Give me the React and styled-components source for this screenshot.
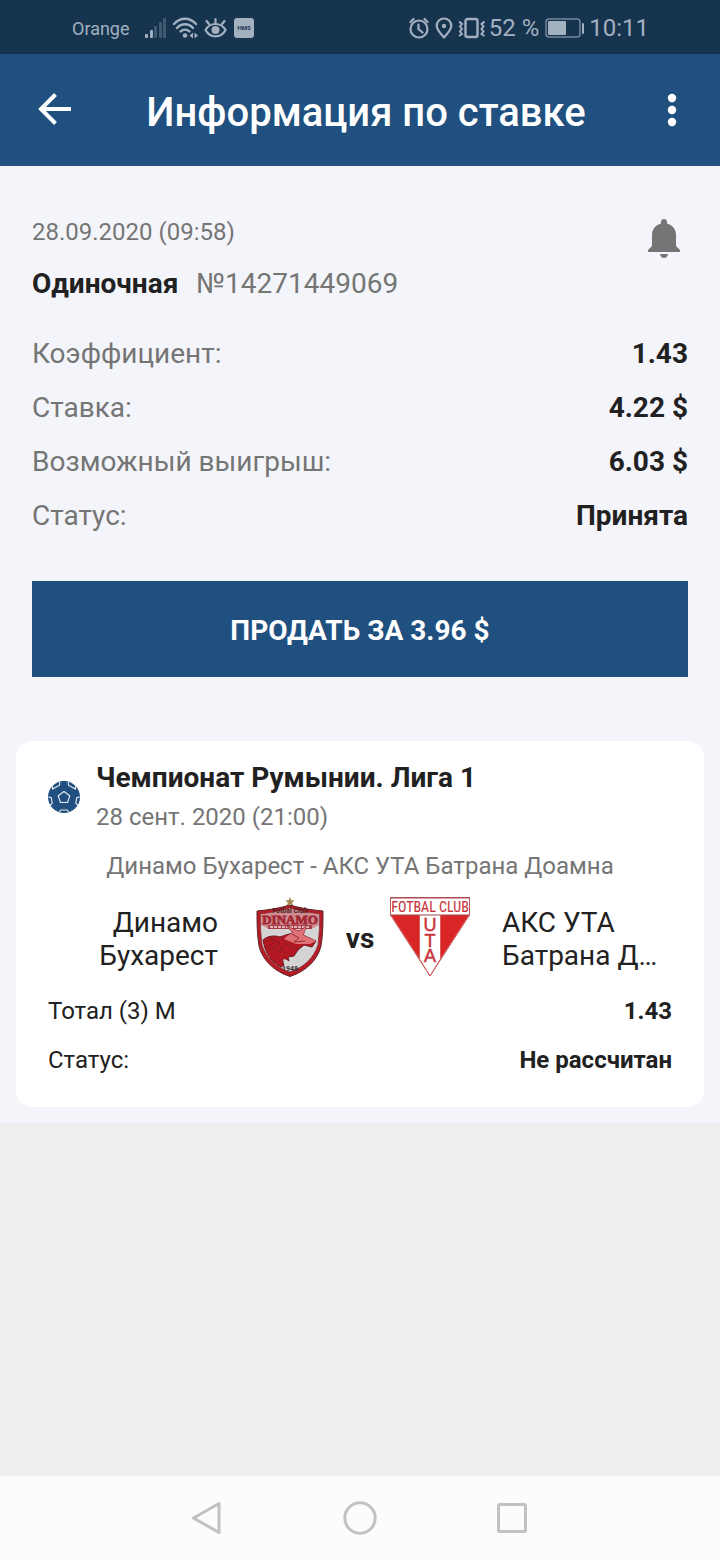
import React from 'react'
import styled, { createGlobalStyle } from 'styled-components'

const bet = {
  date: '28.09.2020 (09:58)',
  type: 'Одиночная',
  number: '№14271449069',
  rows: [
    { label: 'Коэффициент:', value: '1.43' },
    { label: 'Ставка:', value: '4.22 $' },
    { label: 'Возможный выигрыш:', value: '6.03 $' },
    { label: 'Статус:', value: 'Принята' },
  ],
}

const eventRows = [
  { label: 'Тотал (3) М', value: '1.43' },
  { label: 'Статус:', value: 'Не рассчитан' },
]

const SignalIcon = () => (
  <svg width='21' height='22' viewBox='0 0 21 22' fill='#a2b0c0' aria-hidden='true'>
    <rect x='0' y='17' width='3' height='4' rx='1' />
    <rect x='5' y='13' width='3' height='8' rx='1' />
    <rect x='9' y='9' width='3' height='12' rx='1' opacity='0.3' />
    <rect x='14' y='5' width='3' height='16' rx='1' opacity='0.3' />
    <rect x='18' y='1' width='3' height='20' rx='1' opacity='0.3' />
  </svg>
)

const WifiIcon = () => (
  <svg width='26' height='22' viewBox='0 0 26 22' fill='none' stroke='#a2b0c0' strokeWidth='2.4' strokeLinecap='round' aria-hidden='true'>
    <path d='M2 7C8 0 18 0 24 7' />
    <path d='M5 11C9.500 6 16.500 6 21 11' />
    <path d='M8.500 14.500C11 12 15 12 17.500 14.500' />
    <circle cx='13' cy='18.500' r='2.300' fill='#a2b0c0' stroke='none' />
    <path d='M21 15.500v6l-3.500-3zM22.500 15.500v6l3.500-3z' fill='#a2b0c0' stroke='none' />
  </svg>
)

const EyeIcon = () => (
  <svg width='24' height='22' viewBox='0 0 24 22' fill='none' stroke='#a2b0c0' strokeWidth='2.2' strokeLinecap='round' aria-hidden='true'>
    <path d='M1.500 13C6 5 17 5 21.500 13C17 21.500 6 21.500 1.500 13z' />
    <circle cx='11.500' cy='13' r='4' fill='#a2b0c0' stroke='none' />
    <path d='M11.500 6V2M5 7L2.500 4M18 7L20.500 4' />
  </svg>
)

const HmsIcon = () => (
  <svg width='20' height='20' viewBox='0 0 20 20' aria-hidden='true'>
    <rect width='20' height='20' rx='3' fill='#a2b0c0' />
    <text x='10' y='12' textAnchor='middle' fontSize='6' fontWeight='700' fill='#17344f'>HMS</text>
  </svg>
)

const AlarmIcon = () => (
  <svg width='22' height='22' viewBox='0 0 22 22' fill='none' stroke='#a2b0c0' strokeWidth='2.2' strokeLinecap='round' aria-hidden='true'>
    <circle cx='10' cy='12' r='8.500' />
    <path d='M9.500 7.500V12l4 3.500M1.500 5L4.500 2M18.500 5L15.500 2' />
  </svg>
)

const PinIcon = () => (
  <svg width='18' height='22' viewBox='0 0 18 22' fill='none' stroke='#a2b0c0' strokeWidth='2.200' strokeLinejoin='round' aria-hidden='true'>
    <path d='M9 20.500C5 16 1.700 12.500 1.700 9C1.700 4.500 5 1.500 9 1.500S16.300 4.500 16.300 9C16.300 12.500 13 16 9 20.500z' />
    <circle cx='9' cy='9' r='2.200' fill='#a2b0c0' stroke='none' />
  </svg>
)

const VibrateIcon = () => (
  <svg width='28' height='22' viewBox='0 0 28 22' fill='none' stroke='#a2b0c0' strokeWidth='2' aria-hidden='true'>
    <rect x='8.500' y='2' width='12' height='18' rx='2' strokeWidth='2.400' />
    <path d='M2 4.500l3 2.500l-2 2.500l2 2.500l-2 2.500l2 2.500l-3 2M27.500 4.500l-3 2.500l2 2.500l-2 2.500l2 2.500l-2 2.500l3 2' />
  </svg>
)

const BatteryIcon = () => (
  <svg width='42' height='20' viewBox='0 0 42 20' fill='none' aria-hidden='true'>
    <rect x='3' y='1' width='34' height='18' rx='3' stroke='#7387a0' strokeWidth='1.500' />
    <rect x='5' y='3' width='18' height='14' rx='1' fill='#a2b0c0' />
    <rect x='39' y='5' width='2' height='11' rx='1' fill='#a2b0c0' />
  </svg>
)

const BackIcon = () => (
  <svg width='34' height='34' viewBox='0 0 34 34' fill='none' stroke='#fff' strokeWidth='4' aria-hidden='true'>
    <path d='M34 16H4M18.500 1.500L4 16L18.500 30.500' />
  </svg>
)

const MoreIcon = () => (
  <svg width='10' height='34' viewBox='0 0 10 34' fill='#fff' aria-hidden='true'>
    <circle cx='5' cy='5' r='4.200' />
    <circle cx='5' cy='17' r='4.200' />
    <circle cx='5' cy='29' r='4.200' />
  </svg>
)

const BellIcon = () => (
  <svg width='32' height='40' viewBox='0 0 32 40' fill='#757575' aria-hidden='true'>
    <path d='M16 0C14.300 0 13 1.300 13 3V4.400C7.500 5.700 4 10.300 4 16V27L0 31V33H32V31L28 27V16C28 10.300 24.500 5.700 19 4.400V3C19 1.300 17.700 0 16 0z' />
    <path d='M12 35H20C20 37.300 18.300 39 16 39S12 37.300 12 35z' />
  </svg>
)

const BallIcon = () => (
  <svg width='32' height='32' viewBox='0 0 32 32' fill='none' stroke='#e6edf4' strokeWidth='1.100' aria-hidden='true'>
    <circle cx='16' cy='16' r='16' fill='#20507f' stroke='none' />
    <path d='M16 10.500L21.800 14.700L19.600 21.500H12.400L10.200 14.700z' />
    <path d='M4.300 4.500L4.700 8L11.500 4.200L11.800 1M27.700 4.500L27.300 8L20.500 4.200L20.200 1' />
    <path d='M0.500 15.700L3.300 17L4.200 22.300L2 24.500M31.500 15.700L28.700 17L27.800 22.300L30 24.500M11.300 31L12.700 29H19.300L20.700 31' />
  </svg>
)

const DinamoLogo = () => (
  <svg width='80' height='80' viewBox='0 0 80 80' role='img' aria-label='Динамо Бухарест'>
    <path d='M40 0l1.300 3.300h3.700l-2.900 2.200l1.100 3.500l-3.200-2.100l-3.200 2.100l1.100-3.500l-2.900-2.200h3.700z' fill='#a18a50' />
    <path d='M7 14C19 13 30 11 40 8C50 11 61 13 73 14C73 25 73 37 71 49C68 62 57 74 40 79.500C23 74 12 62 9 49C7 37 7 25 7 14z' fill='#b81c26' stroke='#5b2428' strokeWidth='1' />
    <path d='M10.500 17C21 16 31 14 40 11C49 14 59 16 69.500 17C70 28 69 39 68 48C64 60 55 70 40 75C25 70 16 60 12 48C11 39 10 28 10.500 17z' fill='#d5d4d5' stroke='#823035' strokeWidth='0.800' />
    <path d='M11 17.500C22 16 31 14 40 11.500C49 14 58 16 69 17.500V28L61 32H19L11 28z' fill='#cf8d92' />
    <text x='40' y='16' textAnchor='middle' fontSize='7' fontWeight='700' fill='#4e2026'>Fotbal Club</text>
    <text x='40' y='27' textAnchor='middle' fontFamily='Liberation Serif, serif' fontSize='13' fontWeight='700' fill='#a12732' stroke='#a12732' strokeWidth='0.800'>DINAMO</text>
    <rect x='18' y='28' width='44' height='4' fill='#a73c46' />
    <path d='M20 30H60' stroke='#e2b3b7' strokeWidth='2' strokeDasharray='3 1' />
    <path d='M13 43C17 39 24 38 30 40C35 38 39 37 43 36L37 29C42 32 46 33 49 34C52 33 54 31 56 29C55 33 54 36 53 38L66 44L62 50L54 48L48 53L44 59L38 60L39 64C34 60 31 61 34 68L31 70C20 64 15 55 13 43z' fill='#b51823' stroke='#701b22' strokeWidth='1' />
    <path d='M34 42C38 38 40 37 43 36L37 29C42 32 46 33 49 34C52 33 54 31 56 29C55 33 54 36 53 38L66 44L60 47H46z' fill='#df7177' />
    <path d='M14 45L22 42L30 46L23 51L31 55L24 61M20 39L25 45L17 50L24 55M30 40L37 47L30 52L37 56M42 37L49 41L44 45L55 44M38 48L46 52L52 49' fill='none' stroke='#801d25' strokeWidth='0.800' />
    <text x='40' y='74' textAnchor='middle' fontSize='7' fontWeight='700' fill='#343033'>1948</text>
  </svg>
)

const UtaLogo = () => (
  <svg width='80' height='80' viewBox='0 0 80 80' role='img' aria-label='АКС УТА Батрана Доамна'>
    <path d='M0.500 0.500H79.500V18L40 79L0.500 18z' fill='#fff' stroke='#b9555b' strokeWidth='1' />
    <path d='M1 18H29.500V62zM79 18H50.500V62z' fill='#d92525' />
    <path d='M0 18H80M0 1H80' stroke='#a84449' strokeWidth='1' />
    <path d='M29.500 18V62L40 79L50.500 62V18' fill='none' stroke='#d95c60' strokeWidth='1' />
    <g fill='#c9333a' stroke='#c9333a' textAnchor='middle'>
      <text x='40' y='15' fontFamily='Roboto Condensed, Roboto, sans-serif' fontSize='14' strokeWidth='0.100'>FOTBAL CLUB</text>
      <text fontFamily='Liberation Sans, sans-serif' fontSize='18' strokeWidth='0.500'>
        <tspan x='40' y='34'>U</tspan>
        <tspan x='40' y='50'>T</tspan>
        <tspan x='40' y='65'>A</tspan>
      </text>
    </g>
  </svg>
)

const App = () => {
  return (
    <Page>
      <GlobalStyle />
      <StatusBar>
        <StatusGroup $gap={6}>
          <Carrier>Orange</Carrier>
          <SignalIcon />
          <WifiIcon />
          <EyeIcon />
          <HmsIcon />
        </StatusGroup>
        <StatusGroup $gap={4}>
          <AlarmIcon />
          <PinIcon />
          <VibrateIcon />
          <span>52 %</span>
          <BatteryIcon />
          <span>10:11</span>
        </StatusGroup>
      </StatusBar>

      <Header>
        <HeaderButton $width={108} aria-label='Назад'>
          <BackIcon />
        </HeaderButton>
        <h1>Информация по ставке</h1>
        <HeaderButton $width={96} aria-label='Меню'>
          <MoreIcon />
        </HeaderButton>
      </Header>

      <Content>
        <Summary>
          <SummaryTop>
            <div>
              <BetDate>{bet.date}</BetDate>
              <BetTitle>
                <strong>{bet.type}</strong>
                <span>{bet.number}</span>
              </BetTitle>
            </div>
            <BellButton aria-label='Уведомления'>
              <BellIcon />
            </BellButton>
          </SummaryTop>
          <BetRows>
            {bet.rows.map(({ label, value }) => (
              <Row key={label}>
                <dt>{label}</dt>
                <dd>{value}</dd>
              </Row>
            ))}
          </BetRows>
          <SellButton>ПРОДАТЬ ЗА 3.96 $</SellButton>
        </Summary>

        <Card>
          <CardHeader>
            <BallIcon />
            <div>
              <h2>Чемпионат Румынии. Лига 1</h2>
              <p>28 сент. 2020 (21:00)</p>
            </div>
          </CardHeader>
          <MatchName>Динамо Бухарест - АКС УТА Батрана Доамна</MatchName>
          <Teams>
            <TeamName $align='right'>
              Динамо
              <br />
              Бухарест
            </TeamName>
            <DinamoLogo />
            <Versus>vs</Versus>
            <UtaLogo />
            <TeamName $align='left'>
              АКС УТА
              <br />
              Батрана Д…
            </TeamName>
          </Teams>
          <EventRows>
            {eventRows.map(({ label, value }) => (
              <Row key={label} $small>
                <dt>{label}</dt>
                <dd>{value}</dd>
              </Row>
            ))}
          </EventRows>
        </Card>
      </Content>

      <NavBar>
        <NavButton aria-label='Назад'>
          <svg width='34' height='36' viewBox='0 0 34 36'>
            <path d='M28 3.500V32.500L2.500 18z' />
          </svg>
        </NavButton>
        <NavButton aria-label='Домой'>
          <svg width='34' height='36' viewBox='0 0 34 36'>
            <circle cx='17' cy='18' r='15.200' />
          </svg>
        </NavButton>
        <NavButton aria-label='Недавние'>
          <svg width='34' height='36' viewBox='0 0 34 36'>
            <rect x='3.500' y='4.500' width='27' height='27' rx='1' />
          </svg>
        </NavButton>
      </NavBar>
    </Page>
  )
}

const GlobalStyle = createGlobalStyle`
* {
  box-sizing: border-box;
  margin: 0;
  padding: 0;
}

body {
  background: #eeeeee;
  color: #212121;
  font-family: Roboto, 'Liberation Sans', sans-serif;
}

button {
  border: none;
  background: none;
  font-family: inherit;
  cursor: pointer;
}

svg {
  display: block;
  flex-shrink: 0;
}
`

const Page = styled.div`
display: flex;
flex-direction: column;
min-height: 100vh;
`

const StatusBar = styled.div`
display: flex;
justify-content: space-between;
align-items: center;
height: 54px;
padding: 2px 71px 0 72px;
background: #17344f;
color: #a2b0c0;
font-size: 24px;
`

const StatusGroup = styled.div`
display: flex;
align-items: center;
gap: ${({ $gap }) => $gap}px;
white-space: nowrap;
`

const Carrier = styled.span`
margin-right: 9px;
font-size: 18px;
`

const Header = styled.header`
display: flex;
align-items: center;
height: 112px;
background: #20507f;
color: white;

h1 {
  flex: 1;
  padding-top: 6px;
  font-size: 40px;
  font-weight: 500;
  line-height: 48px;
  text-align: center;
  white-space: nowrap;
}
`

const HeaderButton = styled.button`
display: flex;
justify-content: center;
align-items: center;
width: ${({ $width }) => $width}px;
height: 96px;
`

const Content = styled.main`
padding-bottom: 16px;
background: #f4f5fa;
`

const Summary = styled.section`
padding: 50px 32px 64px;
`

const SummaryTop = styled.div`
display: flex;
justify-content: space-between;
align-items: flex-start;
`

const BetDate = styled.p`
color: #757575;
font-size: 24px;
line-height: 32px;
`

const BetTitle = styled.p`
display: flex;
gap: 18px;
margin-top: 18px;
font-size: 28px;
line-height: 36px;

strong {
  font-weight: 700;
}

span {
  color: #757575;
}
`

const BellButton = styled.button`
padding: 3px 8px 0;
`

const BetRows = styled.dl`
margin: 25px 0 38px;
`

const Row = styled.div`
display: flex;
justify-content: space-between;
font-size: ${({ $small }) => ($small ? '24px' : '28px')};
line-height: ${({ $small }) => ($small ? '49px' : '54px')};

dt {
  color: ${({ $small }) => ($small ? '#212121' : '#757575')};
}

dd {
  font-weight: 700;
}
`

const SellButton = styled.button`
width: 100%;
height: 96px;
padding-top: 2px;
background: #20507f;
color: white;
font-size: 28px;
font-weight: 700;
`

const Card = styled.section`
margin: 0 16px;
padding: 16px 32px 22px;
border-radius: 16px;
background: white;
`

const CardHeader = styled.div`
display: flex;
align-items: center;
gap: 16px;

h2 {
  padding-top: 1px;
  font-size: 28px;
  font-weight: 700;
  line-height: 40px;
}

p {
  color: #757575;
  font-size: 24px;
  line-height: 39px;
}
`

const MatchName = styled.p`
margin: 13px 0 15px;
color: #757575;
font-size: 24px;
line-height: 32px;
text-align: center;
`

const Teams = styled.div`
display: grid;
grid-template-columns: 1fr 80px 60px 80px 1fr;
align-items: center;
`

const TeamName = styled.p`
padding: ${({ $align }) => ($align === 'right' ? '4px 32px 0 0' : '4px 0 0 32px')};
font-size: 28px;
line-height: 33px;
text-align: ${({ $align }) => $align};
white-space: nowrap;
`

const Versus = styled.span`
padding-top: 2px;
font-size: 28px;
font-weight: 700;
text-align: center;
`

const EventRows = styled.dl`
margin-top: 10px;
`

const NavBar = styled.nav`
display: flex;
justify-content: center;
align-items: center;
gap: 118px;
height: 84px;
margin-top: auto;
background: #fcfcfc;
`

const NavButton = styled.button`
svg {
  fill: none;
  stroke: #c1c1c1;
  stroke-width: 3px;
  stroke-linejoin: round;
}
`

export default App
